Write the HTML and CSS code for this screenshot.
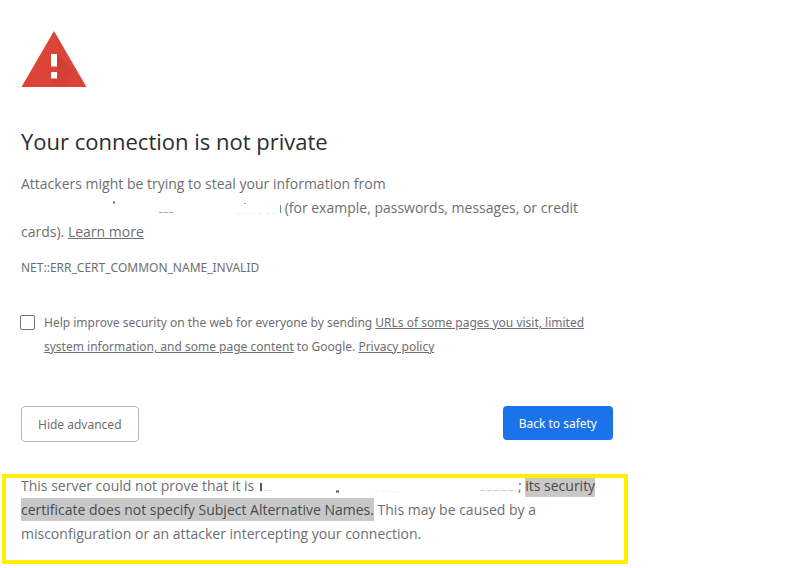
FILE: index.html
```html
<!DOCTYPE html>
<html lang="en">
<head>
<meta charset="utf-8">
<meta name="viewport" content="width=device-width, initial-scale=1">
<title>Privacy error</title>
<link rel="stylesheet" href="styles.css">
</head>
<body>
<main class="interstitial">
  <svg class="warning-icon" viewBox="0 0 66 56" aria-hidden="true">
    <defs>
      <linearGradient id="shade" x1="0" y1="0" x2="1" y2="1">
        <stop offset="0" stop-color="#b5362c"/>
        <stop offset="0.800" stop-color="#db4437"/>
      </linearGradient>
    </defs>
    <path d="M33 0 65.500 56H.5z" fill="#db4437"/>
    <path d="M36 23 51 38 61 56H38L30 47.500 36 42z" fill="url(#shade)" opacity=".6"/>
    <path d="M30 23h6v12.500h-6zM30 41h6v6.500h-6z" fill="#fff"/>
  </svg>
  <h1 class="title">Your connection is not private</h1>
  <p class="message">Attackers might be trying to steal your information from
    <svg class="redacted redacted-host" viewBox="0 0 260 16" aria-hidden="true">
      <path d="M92 2.500h2" stroke="#666" stroke-width="2"/>
      <path d="M223 3.500h2" stroke="#aaa"/>
      <path d="M138 12.500h15" stroke="#aaa" stroke-dasharray="4 1"/>
      <path d="M216 13.500h42" stroke="#eee" stroke-dasharray="5 2"/>
      <path d="M259.500 5v8" stroke="#5b8fc4"/>
    </svg>
    (for example, passwords, messages, or credit cards). <a class="link" href="#">Learn more</a></p>
  <p class="error-code">NET::ERR_CERT_COMMON_NAME_INVALID</p>
  <div class="opt-in">
    <input class="checkbox" type="checkbox" id="reporting">
    <label class="opt-in-text" for="reporting">Help improve security on the web for everyone by sending <a class="link" href="#">URLs of some pages you visit, limited system information, and some page content</a> to Google. <a class="link" href="#">Privacy policy</a></label>
  </div>
  <div class="actions">
    <button class="button secondary" type="button">Hide advanced</button>
    <button class="button primary" type="button">Back to safety</button>
  </div>
  <section class="details">
    <p class="details-text">This server could not prove that it is <svg class="redacted redacted-name" viewBox="0 0 260 16" aria-hidden="true">
      <path d="M3 5v8" stroke="#555" stroke-width="2"/>
      <path d="M6 12.500h8" stroke="#ddd" stroke-dasharray="3 2"/>
      <path d="M78 13.500h3" stroke="#555" stroke-width="2"/>
      <path d="M117 13.500h22" stroke="#f2f2f2" stroke-dasharray="4 2"/>
      <path d="M222 12.500h36" stroke="#ccc" stroke-dasharray="5 2"/>
    </svg>; <mark class="selected">its security certificate does not specify Subject Alternative Names.</mark> This may be caused by a misconfiguration or an attacker intercepting your connection.</p>
  </section>
</main>
</body>
</html>
```
FILE: styles.css
```css
* {
  box-sizing: border-box;
}

body {
  margin: 0;
  background: #fff;
  color: #6e6e72;
  font-family: "Open Sans", "Noto Sans", sans-serif;
  font-size: 14px;
  line-height: 24px;
}

.interstitial {
  max-width: 613px;
  padding: 31px 0 0 21px;
}

.warning-icon {
  display: block;
  width: 66px;
  height: 56px;
}

.title {
  margin: 38px 0 15px;
  color: #2b2c30;
  font-size: 22px;
  font-weight: 400;
  line-height: 32px;
}

.message {
  margin: 0;
}

.link {
  color: inherit;
  text-decoration: underline;
}

.redacted {
  width: 260px;
  height: 16px;
  vertical-align: -3px;
}

.error-code {
  margin: 12px 0 0;
  font-family: "Noto Sans", "Open Sans", sans-serif;
  font-size: 12px;
}

.opt-in {
  display: flex;
  align-items: flex-start;
  gap: 9px;
  margin: 31px 0 0 -1px;
}

.checkbox {
  appearance: none;
  flex: none;
  width: 15px;
  height: 15px;
  margin: 4px 0 0;
  border: 1px solid #757575;
  border-radius: 2px;
  background: #fff;
}

.opt-in-text {
  font-family: "Noto Sans", "Open Sans", sans-serif;
  font-size: 12px;
}

.actions {
  display: flex;
  justify-content: space-between;
  align-items: flex-start;
  margin-top: 47px;
}

.button {
  height: 34px;
  padding: 0 16px;
  border: 0;
  border-radius: 4px;
  font-family: "Noto Sans", "Open Sans", sans-serif;
  font-size: 12px;
}

.primary {
  background: #1a73e8;
  color: #fff;
}

.secondary {
  height: 36px;
  border: 1px solid #b5b9bd;
  background: #fff;
  color: #6e6e72;
}

.details {
  position: relative;
  margin: 32px -15px 0 -19px;
  padding: 0 19px 18px;
}

.details::after {
  content: "";
  position: absolute;
  inset: 0;
  border: 4px solid #fff200;
  pointer-events: none;
}

.details-text {
  margin: 0;
  padding-top: 0;
}

.selected {
  padding: 2px 0;
  background: #c8c8c8;
  color: #4a4a4c;
}
```
